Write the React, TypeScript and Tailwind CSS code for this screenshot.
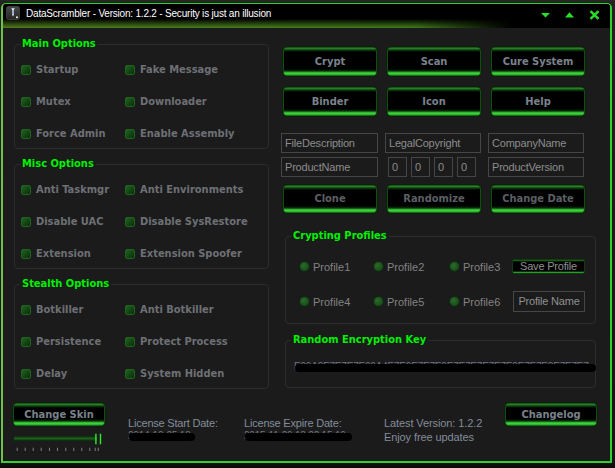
import React from "react";

const boldFont =
  "font-['DejaVu_Sans_Condensed','DejaVu_Sans','Liberation_Sans',sans-serif] font-bold";
const regFont = "font-['Liberation_Sans',Arial,sans-serif]";

function Check({ label }: { label: string }) {
  return (
    <div className="flex h-[32px] items-center">
      <span className="mr-[5px] h-[10px] w-[10px] shrink-0 rounded-[2px] border border-[#1f621f] bg-[linear-gradient(135deg,#1f631f,#0b2d0b)]" />
      <span className={`${boldFont} whitespace-nowrap text-[11px] leading-[14px] text-[#6d7075]`}>
        {label}
      </span>
    </div>
  );
}

function Group({ title, items }: { title: string; items: string[] }) {
  return (
    <div className="relative h-[105px] rounded-[4px] border border-[#2c2c2c] pl-[6px] pt-[9px]">
      <span
        className={`${boldFont} absolute left-[5px] top-[-8px] whitespace-nowrap bg-[#1b1b1b] px-[2px] text-[11px] leading-[14px] text-[#00f000]`}
      >
        {title}
      </span>
      <div className="grid grid-cols-[104px_1fr]">
        {items.map((it) => (
          <Check key={it} label={it} />
        ))}
      </div>
    </div>
  );
}

function GButton({
  label,
  dim,
  className,
}: {
  label: string;
  dim?: boolean;
  className?: string;
}) {
  return (
    <div
      className={`flex items-center justify-center rounded-[5px] border border-[#0a220a] bg-[linear-gradient(to_bottom,#0a1a0a_0px,#2c962c_1px,#103e10_3px,#000_5px,#000_calc(100%-7px),#0c330c_calc(100%-5px),#3ee03e_calc(100%-3px),#2aa82a_calc(100%-1px),#0a2a0a_100%)] shadow-[inset_1px_0_0_#164a16,inset_-1px_0_0_#164a16] ${className ?? ""}`}
    >
      <span
        className={`${boldFont} whitespace-nowrap text-[11px] leading-[14px] ${
          dim ? "text-[#5b5f63]" : "text-[#7a828c]"
        }`}
      >
        {label}
      </span>
    </div>
  );
}

function Field({ text, className }: { text: string; className?: string }) {
  return (
    <div
      className={`flex h-[20px] items-center whitespace-nowrap border border-[#464646] pl-[3px] ${regFont} text-[11px] tracking-[-0.2px] text-[#8c8c8c] ${className ?? ""}`}
    >
      {text}
    </div>
  );
}

function Radio({ label, w }: { label: string; w: string }) {
  return (
    <div className={`flex items-center ${w}`}>
      <span className="mr-[3px] h-[11px] w-[11px] shrink-0 rounded-full border border-[#0d2b0d] bg-[radial-gradient(circle_at_40%_40%,#2c6c2c,#113b11)]" />
      <span className={`${regFont} text-[11px] leading-[14px] text-[#828282]`}>{label}</span>
    </div>
  );
}

function Redacted({ text, className }: { text: string; className?: string }) {
  return (
    <div className={`relative h-[12px] ${className ?? ""}`}>
      <span
        className={`${regFont} block w-fit whitespace-nowrap text-[10px] leading-[12px] tracking-[-0.2px] text-[#6d7480]`}
      >
        {text}
      </span>
      <div className="absolute left-[1px] right-[-3px] top-[3px] h-[8px] rounded-full bg-black" />
    </div>
  );
}

export default function App() {
  return (
    <div className="h-[468px] w-[615px] overflow-hidden bg-[linear-gradient(to_bottom,#272727_0px,#222_4px,#141414_460px,#0a0a0a_100%)] pl-[1px] pt-[3px]">
      <div className="flex h-[460px] w-[611px] flex-col overflow-hidden rounded-t-[5px] border-b-2 border-l-2 border-r-2 border-t border-[#2fcf2f] border-l-[#6cc24a] bg-[#1b1b1b]">
        {/* Title bar */}
        <div className="flex h-[24px] shrink-0 items-start bg-[linear-gradient(to_bottom,#000_0%,#000_62%,rgba(0,0,0,0)_100%),linear-gradient(to_right,#4f7f1c_0%,#3f7c1a_68%,#000_84%)] pl-[3px] pt-[2px]">
          <svg width="14" height="14" viewBox="0 0 14 14">
            <defs>
              <linearGradient id="ic" x1="0" y1="0" x2="0" y2="1">
                <stop offset="0" stopColor="#4a4a4a" />
                <stop offset="1" stopColor="#242424" />
              </linearGradient>
            </defs>
            <rect x="0.5" y="0.5" width="13" height="13" rx="2" fill="url(#ic)" stroke="#555" strokeWidth="0.6" />
            <path d="M5 2.2 H9 L8 3.2 V8.5 L7 10.5 L6 8.5 V3.2 Z" fill="#dfe8f5" />
            <rect x="6.4" y="4" width="1.2" height="4.5" fill="#6a86b8" />
            <rect x="10" y="10.5" width="2" height="1.6" fill="#f0f0f0" />
          </svg>
          <span
            className={`${regFont} ml-[6px] mt-[1px] whitespace-nowrap text-[10px] leading-[14px] tracking-[-0.2px] text-white`}
          >
            DataScrambler - Version: 1.2.2 - Security is just an illusion
          </span>
          <svg className="ml-auto mr-[10px] mt-[4px]" width="60" height="10" viewBox="0 0 60 10">
            <polygon points="1,3 10,3 5.5,7.6" fill="#25e025" />
            <polygon points="25,7.4 34,7.4 29.5,2.2" fill="#25e025" />
            <path d="M50.5 1.2 L58.5 8.8 M58.5 1.2 L50.5 8.8" stroke="#25e025" strokeWidth="2.4" />
          </svg>
        </div>

        {/* Body */}
        <div className="flex flex-col">
          <div className="flex">
            {/* Left column */}
            <div className="ml-[11px] flex w-[255px] flex-col gap-[15px] pt-[16px]">
              <Group
                title="Main Options"
                items={["Startup", "Fake Message", "Mutex", "Downloader", "Force Admin", "Enable Assembly"]}
              />
              <Group
                title="Misc Options"
                items={[
                  "Anti Taskmgr",
                  "Anti Environments",
                  "Disable UAC",
                  "Disable SysRestore",
                  "Extension",
                  "Extension Spoofer",
                ]}
              />
              <Group
                title="Stealth Options"
                items={["Botkiller", "Anti Botkiller", "Persistence", "Protect Process", "Delay", "System Hidden"]}
              />
            </div>

            {/* Right column */}
            <div className="ml-[12px] flex w-[317px] flex-col pt-[18px]">
              <div className="ml-[1px] grid grid-cols-[96px_96px_96px] gap-x-[8px] gap-y-[9px]">
                <GButton label="Crypt" className="h-[31px]" />
                <GButton label="Scan" className="h-[31px]" />
                <GButton label="Cure System" className="h-[31px]" />
                <GButton label="Binder" className="h-[31px]" />
                <GButton label="Icon" className="h-[31px]" />
                <GButton label="Help" className="h-[31px]" />
              </div>

              <div className="mt-[16px] grid grid-cols-[97px_96px_96px] gap-x-[7px] gap-y-[4px]">
                <Field text="FileDescription" />
                <Field text="LegalCopyright" />
                <Field text="CompanyName" />
                <Field text="ProductName" />
                <div className="flex gap-[4px] pl-[3px]">
                  <Field text="0" className="w-[19px]" />
                  <Field text="0" className="w-[19px]" />
                  <Field text="0" className="w-[19px]" />
                  <Field text="0" className="w-[19px]" />
                </div>
                <Field text="ProductVersion" />
              </div>

              <div className="ml-[1px] mt-[7px] grid grid-cols-[96px_96px_96px] gap-x-[8px]">
                <GButton label="Clone" dim className="h-[30px]" />
                <GButton label="Randomize" dim className="h-[30px]" />
                <GButton label="Change Date" dim className="h-[30px]" />
              </div>

              {/* Crypting Profiles */}
              <div className="relative ml-[4px] mt-[22px] h-[88px] w-[311px] rounded-[4px] border border-[#2c2c2c] pt-[19px]">
                <span
                  className={`${boldFont} absolute left-[5px] top-[-8px] whitespace-nowrap bg-[#1b1b1b] px-[2px] text-[11px] leading-[14px] text-[#00f000]`}
                >
                  Crypting Profiles
                </span>
                <div className="flex h-[21px] items-center pl-[13px]">
                  <Radio label="Profile1" w="w-[74px]" />
                  <Radio label="Profile2" w="w-[76px]" />
                  <Radio label="Profile3" w="w-[63px]" />
                  <div
                    className={`flex h-[15px] w-[73px] items-center justify-center rounded-[2px] border border-[#123a12] bg-[linear-gradient(to_bottom,#1f7a1f_0px,#000_2px,#000_calc(100%-2px),#38d038_100%)] ${regFont} text-[11px] tracking-[-0.2px] text-[#909090]`}
                  >
                    Save Profile
                  </div>
                </div>
                <div className="mt-[14px] flex h-[21px] items-center pl-[13px]">
                  <Radio label="Profile4" w="w-[74px]" />
                  <Radio label="Profile5" w="w-[76px]" />
                  <Radio label="Profile6" w="w-[64px]" />
                  <div
                    className={`flex h-[21px] w-[72px] items-center justify-center border border-[#464646] ${regFont} text-[11px] tracking-[-0.2px] text-[#909090]`}
                  >
                    Profile Name
                  </div>
                </div>
              </div>

              {/* Random Encryption Key */}
              <div className="relative ml-[4px] mt-[16px] h-[48px] w-[311px] rounded-[4px] border border-[#2c2c2c] pl-[8px] pt-[20px]">
                <span
                  className={`${boldFont} absolute left-[5px] top-[-8px] whitespace-nowrap bg-[#1b1b1b] px-[2px] text-[11px] leading-[14px] text-[#00f000]`}
                >
                  Random Encryption Key
                </span>
                <Redacted
                  text="E99A9E7E7E7E99A4E7E9E7E7E9E7E7E7E7E7E9E7E7E3E7E7E7"
                  className="w-[299px]"
                />
              </div>
            </div>
          </div>

          {/* Bottom row */}
          <div className="mt-[13px] flex pl-[9px]">
            <div className="flex w-[94px] flex-col">
              <GButton label="Change Skin" className="h-[25px] w-[94px]" />
              <svg className="ml-[1px] mt-[6px]" width="92" height="20" viewBox="0 0 92 20">
                <defs>
                  <linearGradient id="trk" x1="0" y1="0" x2="0" y2="1">
                    <stop offset="0" stopColor="#0a260a" />
                    <stop offset="0.5" stopColor="#1d601d" />
                    <stop offset="1" stopColor="#0a260a" />
                  </linearGradient>
                </defs>
                <rect x="1" y="3" width="83" height="5" fill="url(#trk)" />
                <rect x="82.2" y="0.7" width="1.4" height="10.6" fill="#2ee82e" />
                <rect x="86.8" y="0.7" width="1.4" height="10.6" fill="#2ee82e" />
                {[3.7, 11.7, 19.7, 27.7, 36, 44, 52.3, 60.3, 68.3, 76.3, 81.7, 84.7].map((x) => (
                  <rect key={x} x={x} y="14.7" width="1" height="3.3" fill="#7e7e7e" />
                ))}
              </svg>
            </div>

            <div className={`${regFont} ml-[22px] w-[116px] pt-[14px] text-[11px] leading-[14px] tracking-[-0.2px] text-[#838c99]`}>
              <div>License Start Date:</div>
              <Redacted text="2014-10-25 18" className="w-[64px]" />
            </div>
            <div className={`${regFont} w-[140px] pt-[14px] text-[11px] leading-[14px] tracking-[-0.2px] text-[#838c99]`}>
              <div>License Expire Date:</div>
              <Redacted text="2015-11-20 18:22:15 19" className="w-[105px]" />
            </div>
            <div className={`${regFont} w-[120px] pt-[14px] text-[11px] leading-[14px] tracking-[-0.1px] text-[#838c99]`}>
              <div>Latest Version: 1.2.2</div>
              <div>Enjoy free updates</div>
            </div>
            <GButton label="Changelog" className="h-[25px] w-[94px]" />
          </div>
        </div>
      </div>
    </div>
  );
}
